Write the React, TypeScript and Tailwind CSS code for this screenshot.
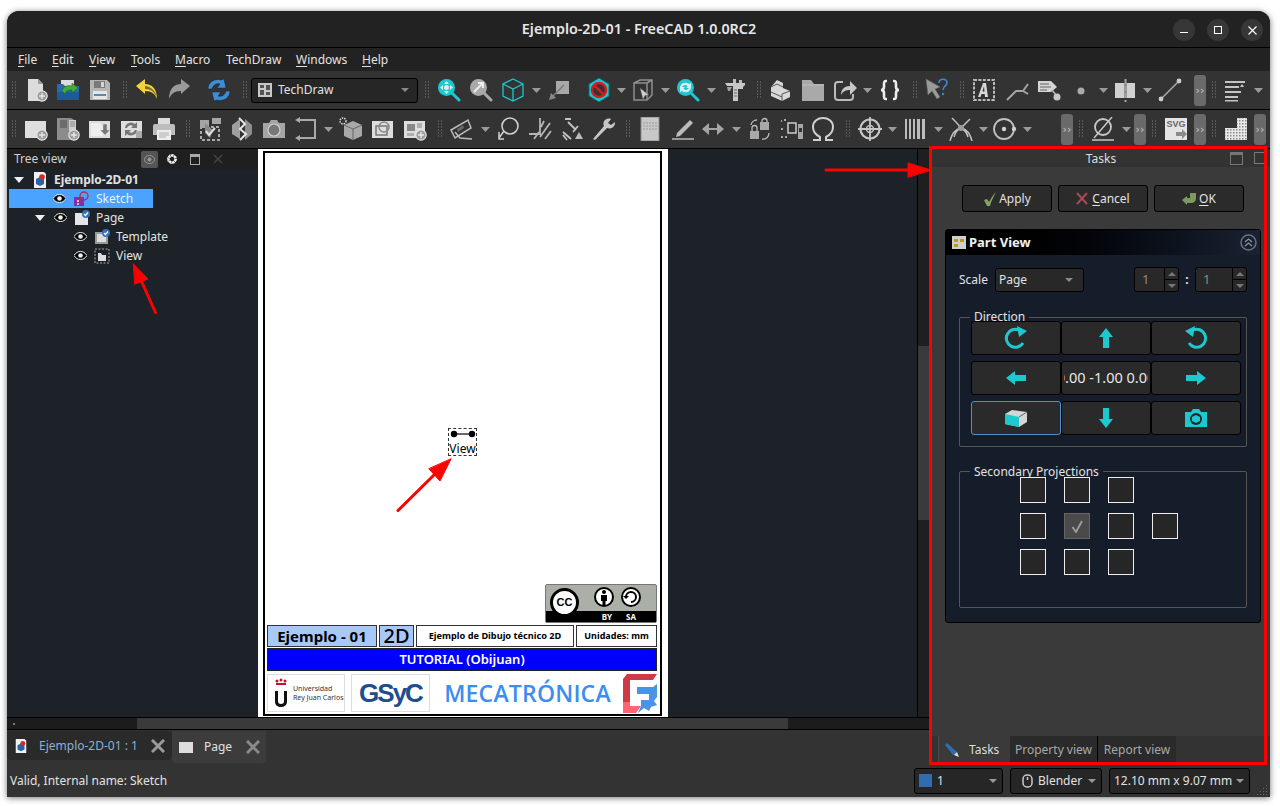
import React from "react";

type P = { children?: React.ReactNode; s?: number };
const I = ({ children, s = 24 }: P) => (
  <svg width={s} height={s} viewBox="0 0 24 24" className="shrink-0" fill="none">
    {children}
  </svg>
);

const Grip = ({ w }: { w: string }) => (
  <div className={`${w} h-full flex items-center justify-end pr-[2px] shrink-0`}>
    <svg width="6" height="18" viewBox="0 0 6 18">
      {[0, 3, 6, 9, 12, 15].map((y) => (
        <g key={y} fill="#5a5a5a">
          <rect x="0" y={y} width="1" height="2" />
          <rect x="3" y={y} width="1" height="2" />
        </g>
      ))}
    </svg>
  </div>
);
const Car = ({ w = "w-[14px]" }: { w?: string }) => (
  <div className={`${w} h-full flex items-center justify-center shrink-0`}>
    <svg width="9" height="5" viewBox="0 0 9 5">
      <path d="M0 0h9L4.5 5z" fill="#9a9a9a" />
    </svg>
  </div>
);
const B = ({ children, w = "w-8" }: { children: React.ReactNode; w?: string }) => (
  <div className={`${w} h-full flex items-center justify-center shrink-0`}>{children}</div>
);
const Over = () => (
  <div className="w-3 h-[31px] rounded-[3px] bg-[#6a6a6a] shrink-0 flex items-center justify-center text-[11px] leading-none text-[#c8c8c8] [font-family:'DejaVu_Sans',sans-serif]">
    ››
  </div>
);

const Plus = ({ cx = 18, cy = 18 }: { cx?: number; cy?: number }) => (
  <g>
    <circle cx={cx} cy={cy} r="5.2" fill="#9d9d9d" stroke="#e5e5e5" strokeWidth="1.2" />
    <path d={`M${cx - 3} ${cy}h6M${cx} ${cy - 3}v6`} stroke="#e8e8e8" strokeWidth="1.4" />
  </g>
);

const NewDoc = () => (
  <I>
    <path d="M4 1h10l5 5v17H4z" fill="#dcdcdc" />
    <path d="M14 1v5h5z" fill="#9c9c9c" />
    <Plus />
  </I>
);
const OpenI = () => (
  <I>
    <path d="M5 2h13v8H5z" fill="#ddd" />
    <path d="M1 6h6l2 2h14v14H1z" fill="#2a6aa8" />
    <path d="M1 14h22v8H1z" fill="#1d5c9a" />
    <path d="M6 13c1-5 6-6 10-5V5l6 5-6 5v-3c-3 0-6 0-7 4z" fill="#3fae3a" stroke="#1f6a1c" strokeWidth=".6" />
  </I>
);
const SaveI = () => (
  <I>
    <path d="M2 2h17l3 3v17H2z" fill="#b5b5b5" />
    <path d="M6 3h11v7H6z" fill="#7a7a7a" />
    <path d="M13 4h3v5h-3z" fill="#d5d5d5" />
    <path d="M5 13h14v8H5z" fill="#e6e6e6" />
    <path d="M6 16h12v2H6z" fill="#5a88b5" />
  </I>
);
const Undo = () => (
  <I>
    <path d="M1 8l9-7v5c7 0 12 5 12 15-2-5-5-8-12-8v3z" fill="#f2d43a" />
    <path d="M10 11c6 0 10 3 12 10-1-8-5-12-12-13z" fill="#7d6d2a" />
  </I>
);
const Redo = () => (
  <I>
    <path d="M23 8l-9-7v5C7 6 2 11 2 21c2-5 5-8 12-8v3z" fill="#9a9a9a" />
  </I>
);
const Refresh = () => (
  <I>
    <path d="M1 11C1 4 8 0 14 2l3-1 2 9-9 0 3-4C9 5 6 7 5 11z" fill="#3d8ed4" stroke="#123" strokeWidth=".5" />
    <path d="M23 13c0 7-7 11-13 9l-3 1-2-9 9 0-3 4c4 1 7-1 8-5z" fill="#3d8ed4" stroke="#123" strokeWidth=".5" />
  </I>
);
const Mag = ({ children, c = "#1cc7cf" }: { children?: React.ReactNode; c?: string }) => (
  <I>
    <path d="M15 15l7 7" stroke={c} strokeWidth="3" strokeLinecap="round" />
    <circle cx="9.5" cy="9.5" r="8.5" fill={c} />
    {children}
  </I>
);
const Cube = ({ c = "#1cc7cf" }: { c?: string }) => (
  <I>
    <path d="M12 1l10 5v12l-10 5-10-5V6zM2 6l10 5 10-5M12 11v12" stroke={c} strokeWidth="1.3" />
  </I>
);
const ToPlane = () => (
  <I>
    <path d="M9 3h13v13H9z" fill="#a8a8a8" />
    <path d="M17 7L4 20" stroke="#777" strokeWidth="1.4" />
    <path d="M2 22l2-7 5 5z" fill="#888" />
  </I>
);
const NoSign = () => (
  <I>
    <path d="M12 0l10 6v12l-10 6-10-6V6z" fill="#1cc7cf" stroke="#0a6b70" />
    <circle cx="12" cy="12" r="7" fill="#333" stroke="#d11c22" strokeWidth="2.6" />
    <path d="M7 7l10 10" stroke="#d11c22" strokeWidth="2.6" />
  </I>
);
const BoxSel = () => (
  <I>
    <path d="M3 5l6-3h12v15l-5 5H3zM3 5h13v17M16 5l5-3" stroke="#8f8f8f" strokeWidth="1.5" />
    <path d="M9 10l9 7-4 .6-2 4z" fill="#cfcfcf" stroke="#555" strokeWidth=".5" />
  </I>
);
const Caliper = () => (
  <I>
    <path d="M2 5h20v2l-2 2v2h-5v12h-5V8H4z" fill="#c8c8c8" />
    <path d="M10 1h3v4h-3zM16 2h3v3h-3z" fill="#bdbdbd" />
    <path d="M11 12h3M11 15h3M11 18h3" stroke="#666" />
    <path d="M4 9h5l-2 4H5z" fill="#a0a0a0" />
  </I>
);
const Stairs = () => (
  <I>
    <path d="M8 2l6 3 0 5 7 3v6l-8 4-11-5v-9z" fill="#d8d8d8" />
    <path d="M2 9l6-3 6 3M13 23v-7l8-3M2 14l11 5" stroke="#555" strokeWidth="1" />
  </I>
);
const Folder = () => (
  <I>
    <path d="M1 2h9l3 4h10v17H1z" fill="#a9a9a9" />
    <path d="M1 7h22" stroke="#bfbfbf" />
  </I>
);
const Share = () => (
  <I>
    <path d="M10 4H5a3 3 0 00-3 3v12a3 3 0 003 3h12a3 3 0 003-3v-3" stroke="#bbb" strokeWidth="2" />
    <path d="M8 17c0-6 4-9 9-9V3l7 7-7 7v-5c-4 0-7 1-9 5z" fill="#c8c8c8" />
  </I>
);
const Braces = () => (
  <I>
    <path d="M9 3H8C6 3 6 4 6 6v3c0 2-1 3-3 3 2 0 3 1 3 3v3c0 2 0 3 2 3h1M15 3h1c2 0 2 1 2 3v3c0 2 1 3 3 3-2 0-3 1-3 3v3c0 2 0 3-2 3h-1" stroke="#eee" strokeWidth="2.6" />
  </I>
);
const Help = () => (
  <I>
    <path d="M1 1l14 8-5 2 5 8-3 2-5-8-4 4z" fill="#9a9a9a" stroke="#666" strokeWidth=".6" />
    <path d="M14 5c0-5 8-5 8 0 0 3-4 3-4 7" stroke="#3a86d8" strokeWidth="1.6" />
    <circle cx="18" cy="16" r="1.2" fill="#3a86d8" />
  </I>
);
const Anno = () => (
  <I>
    <path d="M2 2h20v20H2z" stroke="#bbb" strokeWidth="2" strokeDasharray="3 1.4" />
    <path d="M6 19L11 5h3l2 14h-3l-.3-3H9.500l-1 3zM10.500 13.500h2L12 8z" fill="#d8d8d8" />
  </I>
);
const Leader = () => (
  <I>
    <path d="M2 22l9-9h7M18 13l5-7M18 13l5 3" stroke="#a5a5a5" strokeWidth="2" />
  </I>
);
const Tag = () => (
  <I>
    <path d="M1 3h13l6 6-6 5H1z" fill="#d5d5d5" />
    <path d="M3 6h9M3 9h11M3 12h7" stroke="#666" />
    <path d="M15 12l4 5" stroke="#bbb" strokeWidth="1.5" />
    <circle cx="20" cy="19" r="3.500" fill="#c8c8c8" />
  </I>
);
const Dot = () => (
  <I>
    <circle cx="12" cy="13" r="3.500" fill="#aaa" />
  </I>
);
const Section = () => (
  <I>
    <path d="M2 5h20v15H2z" fill="#d0d0d0" />
    <path d="M11 5h3v15h-3z" fill="#8c8c8c" />
    <path d="M12.500 1v23" stroke="#a5a5a5" strokeWidth="2" strokeDasharray="5 2" />
  </I>
);
const Line = () => (
  <I>
    <path d="M3 21L21 3" stroke="#a8a8a8" strokeWidth="1.600" />
    <circle cx="3" cy="21" r="2.400" fill="#ccc" />
    <circle cx="21" cy="3" r="2.400" fill="#ccc" />
  </I>
);
const Align = () => (
  <I>
    <path d="M1 3h20v2H1zM1 8h14v2H1zM1 13h16v2H1zM1 18h13v2H1zM1 22h13v1.500H1z" fill="#c4c4c4" />
    <path d="M16 9l2-3 2 3z" fill="#ccc" />
  </I>
);

const Sheet = ({ children }: { children?: React.ReactNode }) => (
  <I>
    <path d="M1 4h21v17H1z" fill="#dedede" />
    {children}
  </I>
);
const T2a = () => (
  <Sheet>
    <Plus />
  </Sheet>
);
const T2b = () => (
  <I>
    <path d="M1 1h14l5 3v19H1z" fill="#8c8c8c" />
    <path d="M4 3h7v8H4z" fill="#6c6c6c" />
    <path d="M13 3h7v11h-7z" fill="#d0d0d0" />
    <path d="M14 5h5M14 7h5M14 9h5" stroke="#888" />
    <Plus />
  </I>
);
const T2c = () => (
  <Sheet>
    <path d="M3 6h9l3 4v9H3z" fill="#eee" />
    <path d="M15 7v6h-3l5 5 5-5h-3V7z" fill="#777" stroke="#ddd" strokeWidth=".5" />
  </Sheet>
);
const T2d = () => (
  <Sheet>
    <path d="M5 11a6 6 0 0110-4l2-2v6h-6l2-2a4 4 0 00-6 2zM17 13a6 6 0 01-10 4l-2 2v-6h6l-2 2a4 4 0 006-2z" fill="#777" />
    <path d="M16 14h6v7h-6z" fill="#aaa" />
  </Sheet>
);
const Printer = () => (
  <I>
    <path d="M6 1h12v8H6z" fill="#dcdcdc" />
    <path d="M1 9a2 2 0 012-2h18a2 2 0 012 2v9H1z" fill="#bdbdbd" />
    <path d="M5 13h14v10H5z" fill="#eee" />
    <path d="M7 16h10M7 18h10M7 20h7" stroke="#aaa" />
  </I>
);
const T3a = () => (
  <I>
    <path d="M3 10h18v13H3z" stroke="#aaa" strokeWidth="2" strokeDasharray="3 2" />
    <path d="M2 3h9v8H2zM14 1h9v6h-9z" fill="#a5a5a5" />
    <path d="M7 6l8 7-3 8-5-5z" fill="#8a8a8a" />
    <path d="M8 14l3 4 6-7" stroke="#e0e0e0" strokeWidth="2" />
  </I>
);
const T3b = () => (
  <I>
    <path d="M2 8l8-6v20l-8-5z" fill="#9f9f9f" />
    <path d="M15 2l7 6v9l-7 6z" fill="#8e8e8e" />
    <path d="M9 1l6 6-5 5 6 5-6 6" stroke="#e5e5e5" strokeWidth="2" />
  </I>
);
const Camera = () => (
  <I>
    <path d="M1 6h6l2-3h6l2 3h6v15H1z" fill="#a5a5a5" />
    <circle cx="12" cy="13" r="6" fill="#777" stroke="#d0d0d0" strokeWidth="1.200" />
  </I>
);
const Bracket = () => (
  <I>
    <path d="M6 3h15v18H6" stroke="#a8a8a8" strokeWidth="2" />
    <path d="M1 3l5-3v6zM1 21l5-3v6z" fill="#a8a8a8" />
  </I>
);
const Iso = () => (
  <I>
    <path d="M14 4l9 4v11l-9 4-9-4V8z" fill="#a8a8a8" />
    <path d="M5 8l9 4 9-4M14 12v11" stroke="#666" />
    <circle cx="4" cy="4" r="3" stroke="#ddd" strokeWidth="1.400" strokeDasharray="1.500 1" />
  </I>
);
const Detail = () => (
  <Sheet>
    <rect x="5" y="9" width="11" height="9" stroke="#777" strokeWidth="1.500" />
    <circle cx="13" cy="10" r="5" stroke="#888" strokeWidth="1.500" />
  </Sheet>
);
const Multi = () => (
  <Sheet>
    <path d="M4 7h8v7H4z" fill="#888" />
    <path d="M14 6h5v5h-5zM4 16h7v3H4z" fill="#b0b0b0" />
    <Plus />
  </Sheet>
);
const Angled = () => (
  <I>
    <path d="M1 13L18 3l3 8L5 21zM5 15l5 6 12 1" stroke="#bbb" strokeWidth="1.500" />
    <path d="M7 12l6-4 1 3-6 4z" fill="#666" />
  </I>
);
const Loop = () => (
  <I>
    <circle cx="14" cy="9" r="8" stroke="#cfcfcf" strokeWidth="1.600" />
    <path d="M8 14L3 21M3 15v7h5" stroke="#cfcfcf" strokeWidth="1.500" />
  </I>
);
const Cut = () => (
  <I>
    <path d="M1 17h11V1M6 22l5-7M12 20L22 6M17 22l6-8M13 10l3-6" stroke="#b5b5b5" strokeWidth="1.800" />
  </I>
);
const Dims = () => (
  <I>
    <path d="M8 5l8 8M5 2l6 0M13 15l5-6M3 15l8 7M7 23l-4-5" stroke="#c4c4c4" strokeWidth="1.800" />
    <path d="M15 22l4-7 4 7z" fill="#bbb" />
  </I>
);
const Wrench = () => (
  <I>
    <path d="M1 22l2 1L15 11c3 1 6 0 7-2 1-1 1-3 1-4l-4 3-3-2 3-4c-2-1-5 0-6 1-2 2-2 4-1 6z" fill="#c6c6c6" />
  </I>
);
const Ruled = () => (
  <I>
    <path d="M3 0h18v24H3z" fill="#c8c8c8" stroke="#8a8a8a" />
    <path d="M5 6h14M5 9h14M5 12h14" stroke="#9c9c9c" strokeDasharray="2 1" />
  </I>
);
const Pencil = () => (
  <I>
    <path d="M6 16L19 3l3 3L9 19l-4 1z" fill="#bbb" />
    <path d="M1 22h22" stroke="#bbb" strokeWidth="1.400" />
  </I>
);
const Arrows = () => (
  <I>
    <path d="M1 12l7-6v12zM23 12l-7-6v12z" fill="#a4a4a4" />
    <path d="M7 12h10" stroke="#a4a4a4" strokeWidth="2" />
  </I>
);
const Locks = () => (
  <I>
    <path d="M2 14h9v8H2zM12 5h9v8h-9z" fill="#a9a9a9" />
    <path d="M4 14v-3a2.500 2.500 0 015 0v3M14 5V4a2.500 2.500 0 015 0v1M3 8a6 6 0 016-5M21 16a6 6 0 01-7 6" stroke="#bbb" strokeWidth="1.300" />
  </I>
);
const Points = () => (
  <I>
    <path d="M1 4h1M4 3h2M1 12h2M8 6h8v10H8zM1 20h2M5 20h2" stroke="#ccc" strokeWidth="1.500" />
    <path d="M18 7h5v15h-5z" fill="#a5a5a5" />
    <path d="M19 11h3v4h-3z" fill="#333" />
  </I>
);
const Omega = () => (
  <svg width="26" height="24" viewBox="0 0 26 24" className="shrink-0">
    <path d="M3 23h7v-3C6 18 3 15 3 10 3 4 8 1 13 1s10 3 10 9c0 5-3 8-7 10v3h7" stroke="#d0d0d0" strokeWidth="2" fill="none" />
  </svg>
);
const Cross = () => (
  <I>
    <circle cx="12" cy="12" r="9.500" stroke="#c6c6c6" strokeWidth="2.200" />
    <circle cx="12" cy="12" r="3.500" stroke="#c6c6c6" strokeWidth="1.400" />
    <path d="M12 0v24M0 12h24" stroke="#c6c6c6" strokeWidth="1.800" />
  </I>
);
const Bars = () => (
  <I>
    <path d="M2 2h2v20H2zM6 2h2v20H6zM10 2h2v20h-2zM14 2h3v20h-3zM19 2h3v20h-3z" fill="#bcbcbc" />
  </I>
);
const Star = () => (
  <I>
    <path d="M1 24c2-8 6-12 11-13 5 1 9 5 11 13M12 11C9 7 6 4 3 1M12 11l9-9M12 11c-3 1-6 5-7 9M12 11c4 2 6 5 7 9" stroke="#c0c0c0" strokeWidth="1.500" />
    <circle cx="12" cy="11" r="3" fill="#9c9c9c" />
  </I>
);
const CircDot = () => (
  <I>
    <circle cx="11" cy="12" r="10" stroke="#c0c0c0" strokeWidth="1.800" />
    <circle cx="11" cy="12" r="2.200" fill="#d0d0d0" />
    <circle cx="21" cy="12" r="2.200" fill="#d0d0d0" />
  </I>
);
const Diam = () => (
  <I>
    <circle cx="12" cy="10" r="8" stroke="#c6c6c6" strokeWidth="1.800" />
    <path d="M3 21L21 0M1 23h22" stroke="#c6c6c6" strokeWidth="1.500" />
  </I>
);
const SvgI = () => (
  <svg width="24" height="24" viewBox="0 0 24 24" className="shrink-0">
    <path d="M1 1h22v22H1z" fill="#e4e4e4" />
    <path d="M12 15h6v-3l5 5-5 5v-3h-6z" fill="#8a8a8a" />
    <text x="12" y="10" textAnchor="middle" fontSize="9" fontWeight="700" fill="#666" fontFamily="Liberation Sans">SVG</text>
  </svg>
);
const Hatch = () => (
  <svg width="24" height="24" viewBox="0 0 24 24" className="shrink-0">
    <defs>
      <pattern id="h" width="3" height="3" patternUnits="userSpaceOnUse">
        <rect width="3" height="3" fill="#e8e8e8" />
        <rect width="1.500" height="1.500" fill="#8a8a8a" />
      </pattern>
    </defs>
    <path d="M13 1h10v22H1V11h12z" fill="url(#h)" />
  </svg>
);

const Menu = () => (
  <div className="h-[23px] bg-[#222222] flex items-center pl-[11px] pt-[1px] text-[12px] text-[#e2e2e2] shrink-0">
    {[
      ["F", "ile", "w-[34px]"],
      ["E", "dit", "w-[37px]"],
      ["V", "iew", "w-[42px]"],
      ["T", "ools", "w-[44px]"],
      ["M", "acro", "w-[51px]"],
      ["", "TechDraw", "w-[70px]"],
      ["W", "indows", "w-[66px]"],
      ["H", "elp", "w-[40px]"],
    ].map(([a, b, w]) => (
      <div key={b} className={`${w} whitespace-nowrap`}>
        <span className="underline underline-offset-2">{a}</span>
        {b}
      </div>
    ))}
  </div>
);

const Tool1 = () => (
  <div className="h-[39px] bg-[#333333] flex items-center shrink-0 border-b border-black">
    <Grip w="w-[13px]" />
    <B><NewDoc /></B>
    <B><OpenI /></B>
    <B><SaveI /></B>
    <Grip w="w-[15px]" />
    <B><Undo /></B>
    <B><Redo /></B>
    <div className="w-2 shrink-0" />
    <B><Refresh /></B>
    <Grip w="w-4" />
    <div className="w-[167px] h-[25px] shrink-0 bg-[#262626] border border-black rounded-[3px] flex items-center pl-[6px] pr-[8px] text-[12px] text-[#e2e2e2]">
      <svg width="14" height="14" viewBox="0 0 14 14" className="shrink-0 mr-[6px]">
        <path d="M0 0h14v14H0z" fill="#c9c9c9" />
        <path d="M2 2h4v3H2zM8 2h4v5H8zM2 7h4v5H2zM8 9h4v3H8z" fill="#555" />
      </svg>
      <span className="flex-1">TechDraw</span>
      <svg width="8" height="4" viewBox="0 0 8 4"><path d="M0 0h8L4 4z" fill="#888" /></svg>
    </div>
    <Grip w="w-[15px]" />
    <B><Mag><path d="M9.500 3l2.500 3H7zM9.500 16L7 13h5zM3 9.500L6 7v5zM16 9.500L13 7v5z" fill="#e8e8e8" /><circle cx="9.500" cy="9.500" r="2.500" fill="#e8e8e8" /></Mag></B>
    <B><Mag c="#a9a9a9"><path d="M5 14L13 6M9 5h5v5" stroke="#eee" strokeWidth="2" /></Mag></B>
    <B><Cube /></B>
    <Car />
    <B><ToPlane /></B>
    <div className="w-2 shrink-0" />
    <B><NoSign /></B>
    <Car w="w-3" />
    <B><BoxSel /></B>
    <Car w="w-[13px]" />
    <B><Mag><path d="M4 9a5.500 5.500 0 019-3l2-1v5h-5l1.500-1.500A3 3 0 006 10zM15 10a5.500 5.500 0 01-9 3l-2 1V9h5l-1.500 1.500A3 3 0 0013 9z" fill="#e0e8f0" /></Mag></B>
    <Car w="w-[15px]" />
    <B><Caliper /></B>
    <Grip w="w-[14px]" />
    <B><Stairs /></B>
    <B><Folder /></B>
    <B><Share /></B>
    <Car w="w-[13px]" />
    <B><Braces /></B>
    <Grip w="w-[15px]" />
    <B><Help /></B>
    <Grip w="w-[15px]" />
    <B><Anno /></B>
    <div className="w-px shrink-0" />
    <B><Leader /></B>
    <B><Tag /></B>
    <B><Dot /></B>
    <Car w="w-3" />
    <B><Section /></B>
    <Car w="w-[13px]" />
    <B><Line /></B>
    <div className="w-2 shrink-0" />
    <Over />
    <Grip w="w-[14px]" />
    <B><Align /></B>
    <Car w="w-[12px]" />
  </div>
);

const Tool2 = () => (
  <div className="h-[39px] bg-[#333333] flex items-center shrink-0 border-b border-black">
    <Grip w="w-[13px]" />
    <B><T2a /></B>
    <B><T2b /></B>
    <B><T2c /></B>
    <B><T2d /></B>
    <B><Printer /></B>
    <Grip w="w-[14px]" />
    <B><T3a /></B>
    <B><T3b /></B>
    <B><Camera /></B>
    <B><Bracket /></B>
    <Car w="w-[13px]" />
    <B><Iso /></B>
    <B><Detail /></B>
    <B><Multi /></B>
    <Grip w="w-[15px]" />
    <B><Angled /></B>
    <Car />
    <B><Loop /></B>
    <B><Cut /></B>
    <B><Dims /></B>
    <B><Wrench /></B>
    <Grip w="w-[14px]" />
    <B><Ruled /></B>
    <div className="w-[2px] shrink-0" />
    <B w="w-[30px]"><Pencil /></B>
    <B w="w-[30px]"><Arrows /></B>
    <Car w="w-4" />
    <B><Locks /></B>
    <B><Points /></B>
    <B w="w-[30px]"><Omega /></B>
    <Grip w="w-4" />
    <B><Cross /></B>
    <Car w="w-[13px]" />
    <B><Bars /></B>
    <Car />
    <B><Star /></B>
    <Car w="w-3" />
    <B><CircDot /></B>
    <Car w="w-3" />
    <div className="w-7 shrink-0" />
    <Over />
    <Grip w="w-[14px]" />
    <B><Diam /></B>
    <Car w="w-[15px]" />
    <Over />
    <Grip w="w-[14px]" />
    <B><SvgI /></B>
    <div className="w-[2px] shrink-0" />
    <Over />
    <Grip w="w-[14px]" />
    <B><Hatch /></B>
    <div className="w-[2px] shrink-0" />
    <Over />
  </div>
);

const Eye = ({ c = "#f0f0f0" }: { c?: string }) => (
  <svg width="13" height="9" viewBox="0 0 13 9" className="shrink-0">
    <path d="M0 4.500C2 1.500 4 .5 6.500.5S11 1.500 13 4.500C11 7.500 9 8.500 6.500 8.500S2 7.500 0 4.500z" fill="#000" stroke={c} strokeWidth="1" />
    <circle cx="6.500" cy="4.500" r="2.300" fill={c} />
  </svg>
);
const Tri = () => (
  <svg width="10" height="6" viewBox="0 0 10 6" className="shrink-0">
    <path d="M0 0h10L5 6z" fill="#eee" />
  </svg>
);
const DocIco = ({ s = 16 }: { s?: number }) => (
  <svg width={s} height={s} viewBox="0 0 16 16" className="shrink-0">
    <path d="M2 0h10l2 2v14H2z" fill="#f2f2f2" />
    <path d="M4 7l4-2 4 2v5l-4 2-4-2z" fill="#2a63a8" />
    <circle cx="10" cy="5" r="2.800" fill="#d02a2a" />
  </svg>
);
const PageIco = ({ chk = true, hatch = false }: { chk?: boolean; hatch?: boolean }) => (
  <svg width="16" height="16" viewBox="0 0 16 16" className="shrink-0">
    <path d="M1 3h13v12H1z" fill={hatch ? "#999" : "#e5e5e5"} />
    {hatch && <path d="M3 5h9v8H3z" fill="#ddd" />}
    {chk && <circle cx="12" cy="4" r="4" fill="#3572b8" />}
    {chk && <path d="M10 4l1.500 1.500L14 2.500" stroke="#fff" strokeWidth="1.200" fill="none" />}
  </svg>
);

const TreeRow = ({
  pl,
  tri,
  eye,
  icon,
  label,
  cls = "",
}: {
  pl: string;
  tri?: boolean;
  eye?: boolean;
  icon: React.ReactNode;
  label: string;
  cls?: string;
}) => (
  <div className={`h-[19px] flex items-center ${pl} ${cls}`}>
    {tri && <div className="w-[10px] mr-[9px]"><Tri /></div>}
    {eye && <div className="mr-[7px]"><Eye /></div>}
    <div className="mr-[6px]">{icon}</div>
    <span>{label}</span>
  </div>
);

const Tree = () => (
  <div className="w-[250px] bg-[#1d2228] shrink-0 flex flex-col">
    <div className="h-[20px] bg-[#1f1f1f] flex items-center pl-[7px] text-[12px] text-[#cfcfcf]">
      <span className="w-[127px]">Tree view</span>
      <div className="w-[17px] h-[17px] rounded-[2px] bg-[#555555] flex items-center justify-center">
        <svg width="11" height="9" viewBox="0 0 11 9"><ellipse cx="5.500" cy="4.500" rx="5" ry="4" stroke="#999" fill="none" /><circle cx="5.500" cy="4.500" r="2" fill="#999" /></svg>
      </div>
      <div className="w-[22px] flex justify-center ml-[3px]">
        <svg width="12" height="12" viewBox="0 0 12 12"><circle cx="6" cy="6" r="3.500" stroke="#eee" strokeWidth="2.500" fill="none" strokeDasharray="2.500 .5" /><circle cx="6" cy="6" r="4.500" stroke="#eee" strokeWidth="1" fill="none" strokeDasharray="1.500 2" /></svg>
      </div>
      <div className="w-[24px] flex justify-center">
        <div className="w-[10px] h-[11px] border border-[#aaa] border-t-[3px]" />
      </div>
      <div className="w-[22px] flex justify-center">
        <svg width="10" height="10" viewBox="0 0 10 10"><path d="M1 1l8 8M9 1L1 9" stroke="#444" strokeWidth="1.500" /></svg>
      </div>
    </div>
    <div className="pt-[1px] text-[12px] text-[#e2e2e2]">
      <div className="h-[19px] flex items-center pl-[7px] font-bold">
        <div className="w-[10px] mr-[8px]"><Tri /></div>
        <div className="mr-[6px]"><DocIco /></div>
        <span>Ejemplo-2D-01</span>
      </div>
      <TreeRow
        pl="pl-[44px] w-[144px] ml-[2px]"
        eye
        cls="bg-[#4aa3ff] text-[#e8f2ff]"
        icon={
          <svg width="17" height="16" viewBox="0 0 17 16" className="shrink-0">
            <path d="M1 6h10v9H1z" fill="#7a34a8" />
            <circle cx="11" cy="5" r="4" stroke="#b0304a" strokeWidth="1.500" fill="none" />
            <path d="M4 9h2v2H4zM4 12h2v2H4z" fill="#cbb" />
          </svg>
        }
        label="Sketch"
      />
      <TreeRow pl="pl-[28px]" tri eye icon={<PageIco />} label="Page" />
      <TreeRow pl="pl-[67px]" eye icon={<PageIco hatch />} label="Template" />
      <TreeRow
        pl="pl-[67px]"
        eye
        icon={
          <svg width="16" height="16" viewBox="0 0 16 16" className="shrink-0">
            <path d="M1 1h14v14H1z" stroke="#aaa" strokeDasharray="2 1.500" fill="none" />
            <path d="M4 5h3l1 2h4v6H4z" fill="#ddd" />
          </svg>
        }
        label="View"
      />
    </div>
  </div>
);

const Logos = () => (
  <div className="flex items-center h-[38px] mt-[3px]">
    <div className="w-[78px] h-[38px] border border-[#dddddd] flex items-center pl-[6px]">
      <svg width="14" height="30" viewBox="0 0 14 30" className="shrink-0">
        <path d="M2 5h10v2H2z" fill="#c8102e" />
        <circle cx="3" cy="3" r="1.500" fill="#c8102e" />
        <circle cx="7" cy="2" r="1.500" fill="#c8102e" />
        <circle cx="11" cy="3" r="1.500" fill="#c8102e" />
        <path d="M1 13h3v10c0 2 1 3 3 3s3-1 3-3V13h3v11c0 3-3 5-6 5s-6-2-6-5z" fill="#111" />
      </svg>
      <div className="ml-[5px] text-[7px] leading-[9px] text-[#333] whitespace-nowrap">
        Universidad<br />Rey Juan Carlos
      </div>
    </div>
    <div className="w-[79px] h-[38px] ml-[6px] border border-[#dddddd] flex items-center justify-center text-[#1f4e8c] font-black text-[26px] tracking-[-2px] [font-family:'Liberation_Sans',sans-serif]">
      GSyC
    </div>
    <div className="w-[192px] pl-[3px] text-center text-[#3b8df0] text-[23px] font-semibold tracking-[.2px] [font-family:'Open_Sans',sans-serif] whitespace-nowrap">
      MECATRÓNICA
    </div>
    <svg width="35" height="40" viewBox="0 0 35 40" className="shrink-0">
      <path d="M1 6L5 1H35L31 7H8V29L1 38Z" fill="#cf3a45" />
      <path d="M1 29L8 29V33H19L14 40H1Z" fill="#ff6672" />
      <path d="M15 14H31L35 11V24L32 28 35 32 29 34 27 38 22 35 16 40 19 33V27H27V21H15Z" fill="#4a94e6" />
    </svg>
  </div>
);

const PageSheet = () => (
  <div className="ml-px w-[410px] h-[568px] bg-white px-[5px] pt-[2px] pb-[1px] shrink-0">
    <div className="relative h-full border-2 border-black border-b-[2px] w-[399px] pl-[2px] pr-[3px] flex flex-col justify-end pb-[2px] text-black">
      <div className="absolute left-[183px] top-[275px] w-[29px] h-[28px] border border-dashed border-[#333] flex flex-col items-center">
        <svg width="26" height="10" viewBox="0 0 26 10" className="shrink-0">
          <path d="M4 5h18" stroke="#333" strokeWidth="1.500" />
          <circle cx="4" cy="5" r="3.200" fill="#000" />
          <circle cx="22" cy="5" r="3.200" fill="#000" />
        </svg>
        <span className="text-[12px] leading-[12px] mt-[4px]">View</span>
      </div>
      <div className="flex justify-end">
        <div className="w-[112px] h-[39px] rounded-[2px] bg-[#aab0a8] relative flex justify-between pl-[4px] pr-[15px] pt-[2px] border border-[#777]">
          <div className="w-[29px] h-[29px] rounded-full bg-white border-[3px] border-black flex items-center justify-center text-[11px] font-bold [font-family:'Liberation_Sans',sans-serif] mt-[1px] z-10">
            CC
          </div>
          <div className="flex gap-[7px] ml-auto z-10">
            <svg width="20" height="20" viewBox="0 0 20 20"><circle cx="10" cy="10" r="9" fill="#fff" stroke="#000" strokeWidth="2" /><circle cx="10" cy="5" r="2" /><path d="M7 8h6v6h-1.500v5h-3v-5H7z" /></svg>
            <svg width="20" height="20" viewBox="0 0 20 20"><circle cx="10" cy="10" r="9" fill="#fff" stroke="#000" strokeWidth="2" /><path d="M5 10a5 5 0 115 5" stroke="#000" strokeWidth="2" fill="none" /><path d="M2 9h6l-3 3z" /></svg>
          </div>
          <div className="absolute left-0 right-0 bottom-0 h-[11px] bg-black text-white text-[8px] leading-[11px] font-bold flex justify-end gap-[14px] pr-[20px]">
            <span>BY</span>
            <span>SA</span>
          </div>
        </div>
      </div>
      <div className="flex mt-[2px] h-[22px] gap-[2px]">
        <div className="w-[110px] bg-[#a8c9f8] border border-[#333] flex items-center justify-center text-[15px] font-bold whitespace-nowrap">
          Ejemplo - 01
        </div>
        <div className="w-[35px] bg-[#a8c9f8] border border-[#333] flex items-center justify-center text-[20px] font-medium">
          2D
        </div>
        <div className="w-[158px] border border-[#333] flex items-center justify-center text-[9.2px] font-bold whitespace-nowrap">
          Ejemplo de Dibujo técnico 2D
        </div>
        <div className="w-[81px] border border-[#333] flex items-center justify-center text-[9px] font-bold whitespace-nowrap">
          Unidades: mm
        </div>
      </div>
      <div className="mt-[1px] h-[23px] bg-[#0000ff] border border-[#222] text-white font-semibold text-[13px] flex items-center justify-center">
        TUTORIAL (Obijuan)
      </div>
      <Logos />
    </div>
  </div>
);

const DocTabs = () => (
  <div className="h-[34px] bg-[#333333] flex text-[12px] shrink-0 pt-px">
    <div className="w-[165px] h-[29px] bg-[#2a2a2a] rounded-b-[4px] flex items-center pl-[7px] text-[#8fb0d0] shrink-0">
      <DocIco s={14} />
      <span className="ml-[11px] w-[112px] whitespace-nowrap">Ejemplo-2D-01 : 1</span>
      <svg width="14" height="14" viewBox="0 0 14 14"><path d="M1 1l12 12M13 1L1 13" stroke="#9a9a9a" strokeWidth="3" /></svg>
    </div>
    <div className="w-[94px] h-[32px] bg-[#3c3c3c] rounded-b-[4px] flex items-center pl-[7px] text-[#e2e2e2] shrink-0">
      <div className="w-[14px] h-[11px] bg-[#dedede]" />
      <span className="ml-[11px] w-[42px]">Page</span>
      <svg width="14" height="14" viewBox="0 0 14 14"><path d="M1 1l12 12M13 1L1 13" stroke="#8a8a8a" strokeWidth="3" /></svg>
    </div>
  </div>
);

const Btn = ({ children }: { children: React.ReactNode }) => (
  <div className="w-[90px] h-[27px] rounded-[3px] bg-[#2b2b2b] border border-black flex items-center justify-center text-[12px] text-[#e2e2e2]">
    {children}
  </div>
);

const Spin = ({ w }: { w: string }) => (
  <div className={`${w} h-[25px] bg-[#282828] border border-black rounded-[3px] flex text-[13px] text-[#8a8a8a]`}>
    <div className="flex-1 flex items-center pl-[7px]">1</div>
    <div className="w-[14px] border-l border-black flex flex-col">
      <div className="flex-1 flex items-center justify-center border-b border-black">
        <svg width="8" height="4" viewBox="0 0 8 4"><path d="M0 4h8L4 0z" fill="#777" /></svg>
      </div>
      <div className="flex-1 flex items-center justify-center">
        <svg width="8" height="4" viewBox="0 0 8 4"><path d="M0 0h8L4 4z" fill="#777" /></svg>
      </div>
    </div>
  </div>
);

const DBtn = ({ children, cls = "border-black" }: { children: React.ReactNode; cls?: string }) => (
  <div className={`h-[34px] rounded-[3px] bg-[#2a2a2a] border flex items-center justify-center ${cls}`}>{children}</div>
);

const TEAL = "#1ec8cf";
const Arr = ({ d }: { d: string }) => (
  <svg width="22" height="22" viewBox="0 0 22 22" className="shrink-0">
    <path d={d} fill={TEAL} />
  </svg>
);
const Rot = ({ flip }: { flip?: boolean }) => (
  <svg width="24" height="24" viewBox="0 0 24 24" className={flip ? "shrink-0 -scale-x-100" : "shrink-0"}>
    <path d="M19 17A9 9 0 1 1 15 4" stroke={TEAL} strokeWidth="3" fill="none" />
    <path d="M13 0l10 5-8 6z" fill={TEAL} />
  </svg>
);

const Chk = ({ on }: { on?: boolean }) => (
  <div className={`w-[26px] h-[26px] border ${on ? "border-[#666] bg-[#4a4a4a]" : "border-[#eeeeee] bg-[#262626]"} flex items-center justify-center`}>
    {on && (
      <svg width="13" height="13" viewBox="0 0 13 13"><path d="M1.500 7l3.500 5 6-11" stroke="#9a9a9a" strokeWidth="2" fill="none" /></svg>
    )}
  </div>
);

const PartView = () => (
  <div className="mx-[13px] mt-[17px] w-[316px] h-[394px] rounded-[3px] border border-black bg-[#161d2a] flex flex-col shrink-0">
    <div className="h-[25px] bg-gradient-to-r from-[#000000] to-[#1a2232] flex items-center pl-[6px] pr-[3px] text-[13px] font-bold text-[#f0f0f0]">
      <svg width="14" height="13" viewBox="0 0 14 13" className="mr-[3px] shrink-0">
        <path d="M0 0h14v13H0z" fill="#cfcfcf" />
        <path d="M2 3h4v3H2zM8 3h4v3H8zM2 8h4v3H2z" fill="#b59c1e" />
      </svg>
      <span className="flex-1">Part View</span>
      <svg width="17" height="17" viewBox="0 0 17 17">
        <circle cx="8.500" cy="8.500" r="7.500" stroke="#6a7280" strokeWidth="1.500" fill="none" />
        <path d="M5 8l3.500-3L12 8M5 12l3.500-3L12 12" stroke="#8a919c" strokeWidth="1.300" fill="none" />
      </svg>
    </div>
    <div className="flex items-center mt-[12px] pl-[13px] text-[12px] text-[#e2e2e2]">
      <span className="w-[36px]">Scale</span>
      <div className="w-[89px] h-[24px] bg-[#282828] border border-black rounded-[3px] flex items-center pl-[3px] pr-[10px]">
        <span className="flex-1">Page</span>
        <svg width="8" height="4" viewBox="0 0 8 4"><path d="M0 0h8L4 4z" fill="#888" /></svg>
      </div>
      <div className="w-[50px]" />
      <Spin w="w-[45px]" />
      <span className="w-[16px] text-center font-bold">:</span>
      <Spin w="w-[52px]" />
    </div>
    <div className="relative mt-[25px] ml-[13px] w-[288px] h-[130px] border border-[#555] rounded-[2px]">
      <span className="absolute left-[10px] top-[-9px] px-[4px] bg-[#161d2a] text-[12px] leading-[16px] text-[#e2e2e2]">
        Direction
      </span>
      <div className="relative mt-[3px] ml-[11px] w-[270px] grid grid-cols-3 gap-y-[6px]">
        <DBtn><Rot /></DBtn>
        <DBtn><Arr d="M11 1l7 9h-4v11H8V10H4z" /></DBtn>
        <DBtn><Rot flip /></DBtn>
        <DBtn><Arr d="M1 11l9-7v4h11v6H10v4z" /></DBtn>
        <DBtn>
          <div className="w-[84px] overflow-hidden flex justify-center whitespace-nowrap text-[14.5px] text-[#e8e8e8]">0.00 -1.00 0.00</div>
        </DBtn>
        <DBtn><Arr d="M21 11l-9-7v4H1v6h11v4z" /></DBtn>
        <DBtn cls="border-[#4a90d9]">
          <svg width="24" height="20" viewBox="0 0 24 20">
            <path d="M1 6l7-4 15 2v10l-8 5-14-3z" fill="#d5d5d5" />
            <path d="M1 6l14 3v10L1 16z" fill={TEAL} />
            <path d="M15 9l8-5" stroke="#666" />
          </svg>
        </DBtn>
        <DBtn><Arr d="M11 21l7-9h-4V1H8v11H4z" /></DBtn>
        <DBtn>
          <svg width="22" height="20" viewBox="0 0 22 20">
            <path d="M0 4h6l2-3h6l2 3h6v15H0z" fill={TEAL} />
            <circle cx="11" cy="11" r="6" fill="#1c2a30" />
            <path d="M11 7l4 2v4l-4 2-4-2V9z" fill={TEAL} />
          </svg>
        </DBtn>
      </div>
    </div>
    <div className="relative mt-[24px] ml-[13px] w-[288px] h-[137px] border border-[#555] rounded-[2px] pt-[5px] pl-[60px]">
      <span className="absolute left-[10px] top-[-8px] px-[4px] bg-[#161d2a] text-[12px] leading-[16px] text-[#e2e2e2] whitespace-nowrap">
        Secondary Projections
      </span>
      <div className="relative grid grid-cols-[26px_26px_26px_26px] gap-x-[18px] gap-y-[10px]">
        <Chk /><Chk /><Chk /><div />
        <Chk /><Chk on /><Chk /><Chk />
        <Chk /><Chk /><Chk /><div />
      </div>
    </div>
  </div>
);

const Tasks = () => (
  <div className="flex-1 bg-[#3a3a3a] flex flex-col min-w-0 pl-[3px]">
    <div className="h-[18px] bg-[#333333] relative flex items-center justify-center pt-[2px] text-[12px] text-[#dddddd] shrink-0">
      Tasks
      <div className="absolute right-[27px] top-[3px] w-[13px] h-[13px] border border-[#777] border-t-[3px]" />
      <div className="absolute right-[5px] top-[3px] w-[11px] h-[12px] border border-[#777]" />
    </div>
    <div className="flex gap-[6px] pl-[30px] mt-[18px] shrink-0">
      <Btn>
        <svg width="14" height="15" viewBox="0 0 14 15" className="mr-[2px]"><path d="M1 9l3-1 2 3c2-4 4-7 7-10-2 4-5 9-6 14H4z" fill="#86a36c" /></svg>
        Apply
      </Btn>
      <Btn>
        <svg width="12" height="13" viewBox="0 0 12 13" className="mr-[4px]"><path d="M1 1l10 11M11 1L1 12" stroke="#a84a55" strokeWidth="2" /></svg>
        <span><span className="underline underline-offset-2">C</span>ancel</span>
      </Btn>
      <Btn>
        <svg width="15" height="13" viewBox="0 0 15 13" className="mr-[2px]"><path d="M0 8l5-4v2h3V1h6v5c0 3-2 5-5 5H5v2z" fill="#7d9a5e" /></svg>
        <span><span className="underline underline-offset-2">O</span>K</span>
      </Btn>
    </div>
    <PartView />
    <div className="flex-1" />
    <div className="h-[28px] bg-[#333333] flex pl-[6px] text-[12px] shrink-0">
      <div className="w-[72px] bg-[#3a3a3a] flex items-center pl-[5px] text-[#dddddd] border-l border-[#4a4a4a]">
        <svg width="16" height="16" viewBox="0 0 16 16" className="mr-[9px] shrink-0"><path d="M1 3l2-2 10 9-1 3-3 0z" fill="#2f6cb0" /><path d="M13 10l2 5-5-2z" fill="#dddddd" /></svg>
        Tasks
      </div>
      <div className="w-[88px] bg-[#2a2a2a] flex items-center justify-center text-[#a9a9a9] border-r border-black">Property view</div>
      <div className="w-[78px] bg-[#2a2a2a] flex items-center justify-center text-[#a9a9a9]">Report view</div>
    </div>
  </div>
);

const SCombo = ({ w, children }: { w: string; children: React.ReactNode }) => (
  <div className={`${w} h-[26px] bg-[#262626] border border-black rounded-[3px] flex items-center pl-[4px] pr-[5px] text-[12px] text-[#e2e2e2] shrink-0`}>
    <div className="flex-1 flex items-center whitespace-nowrap">{children}</div>
    <svg width="8" height="4" viewBox="0 0 8 4"><path d="M0 0h8L4 4z" fill="#999" /></svg>
  </div>
);

const Status = () => (
  <div className="h-[33px] bg-[#333333] flex items-center pl-[3px] text-[12px] text-[#e2e2e2] shrink-0 rounded-b-[2px]">
    <span className="w-[904px]">Valid, Internal name: Sketch</span>
    <SCombo w="w-[89px]">
      <div className="w-[13px] h-[13px] bg-[#2f6cb0] mr-[5px]" />1
    </SCombo>
    <div className="w-[7px] shrink-0" />
    <SCombo w="w-[92px]">
      <svg width="11" height="14" viewBox="0 0 11 14" className="ml-[7px] mr-[5px]"><rect x="1" y="1" width="9" height="12" rx="4" stroke="#ccc" strokeWidth="1.500" fill="none" /><path d="M5.500 3v3" stroke="#ccc" strokeWidth="1.500" /></svg>
      Blender
    </SCombo>
    <div className="w-[7px] shrink-0" />
    <SCombo w="w-[141px]">12.10 mm x 9.07 mm</SCombo>
    <svg width="12" height="12" viewBox="0 0 12 12" className="ml-[6px] self-end mb-[2px] shrink-0">
      <path d="M10 2h1v1h-1zM7 5h1v1H7zM10 5h1v1h-1zM4 8h1v1H4zM7 8h1v1H7zM10 8h1v1h-1zM1 11h1v1H1zM4 11h1v1H4zM7 11h1v1H7zM10 11h1v1h-1z" fill="#666" />
    </svg>
  </div>
);

export default function App() {
  return (
    <div className="relative w-[1280px] h-[806px] bg-white overflow-hidden pt-[11px] pl-[7px] [font-family:'Noto_Sans',sans-serif]">
      <div className="w-[1263px] h-[786px] rounded-t-[12px] overflow-hidden flex flex-col bg-[#333333] shadow-[0_1px_6px_rgba(0,0,0,0.55)]">
        <div className="h-[37px] bg-[#222222] flex items-center shrink-0 border-b border-black relative">
          <div className="flex-1 text-center text-[14.3px] font-semibold text-[#e8e8e8] pl-[1px]">Ejemplo-2D-01 - FreeCAD 1.0.0RC2</div>
          <div className="absolute right-[7px] top-[8px] flex gap-[12px]">
            <div className="w-[22px] h-[22px] rounded-full bg-[#373737] flex items-center justify-center">
              <div className="w-[8px] h-px bg-white mt-[4px]" />
            </div>
            <div className="w-[22px] h-[22px] rounded-full bg-[#373737] flex items-center justify-center">
              <div className="w-[8px] h-[8px] border border-white" />
            </div>
            <div className="w-[22px] h-[22px] rounded-full bg-[#373737] flex items-center justify-center">
              <svg width="9" height="9" viewBox="0 0 9 9"><path d="M.5.5l8 8M8.500.5l-8 8" stroke="#fff" strokeWidth="1.100" /></svg>
            </div>
          </div>
        </div>
        <Menu />
        <Tool1 />
        <Tool2 />
        <div className="flex-1 flex min-h-0">
          <div className="w-[922px] flex flex-col shrink-0">
            <div className="flex flex-1 min-h-0">
              <Tree />
              <div className="flex-1 flex bg-[#1d2228] min-w-0">
                <PageSheet />
                <div className="flex-1" />
                <div className="w-[12px] bg-[#1f1f1f] flex flex-col items-center shrink-0 border-l border-black">
                  <div className="h-[197px]" />
                  <div className="w-full h-[174px] bg-[#3a3a3a]" />
                </div>
              </div>
            </div>
            <div className="h-[13px] bg-[#1c1c1c] flex items-center shrink-0 border-y border-black pl-[6px]">
              <div className="w-[2px] h-[2px] bg-[#777] mr-[122px]" />
              <div className="w-[651px] h-full bg-[#3a3a3a]" />
            </div>
            <DocTabs />
          </div>
          <Tasks />
        </div>
        <Status />
      </div>

      <div className="absolute left-[929px] top-[146px] w-[338px] h-[619px] border-[3px] border-[#ff0000] pointer-events-none" />
      <svg width="1280" height="806" viewBox="0 0 1280 806" className="absolute left-0 top-0 pointer-events-none">
        <g fill="#ff0000" stroke="#ff0000" strokeLinecap="round">
          <path d="M155.500 312.500L140 278" strokeWidth="3" />
          <path d="M133.500 264L148 279L135 284Z" strokeWidth="1" />
          <path d="M398 510.500L436 473" strokeWidth="3" />
          <path d="M451 459L440 481L429 469Z" strokeWidth="1" />
          <path d="M826 170H910" strokeWidth="3" />
          <path d="M931 170L908 163V177Z" strokeWidth="1" />
        </g>
      </svg>
    </div>
  );
}
